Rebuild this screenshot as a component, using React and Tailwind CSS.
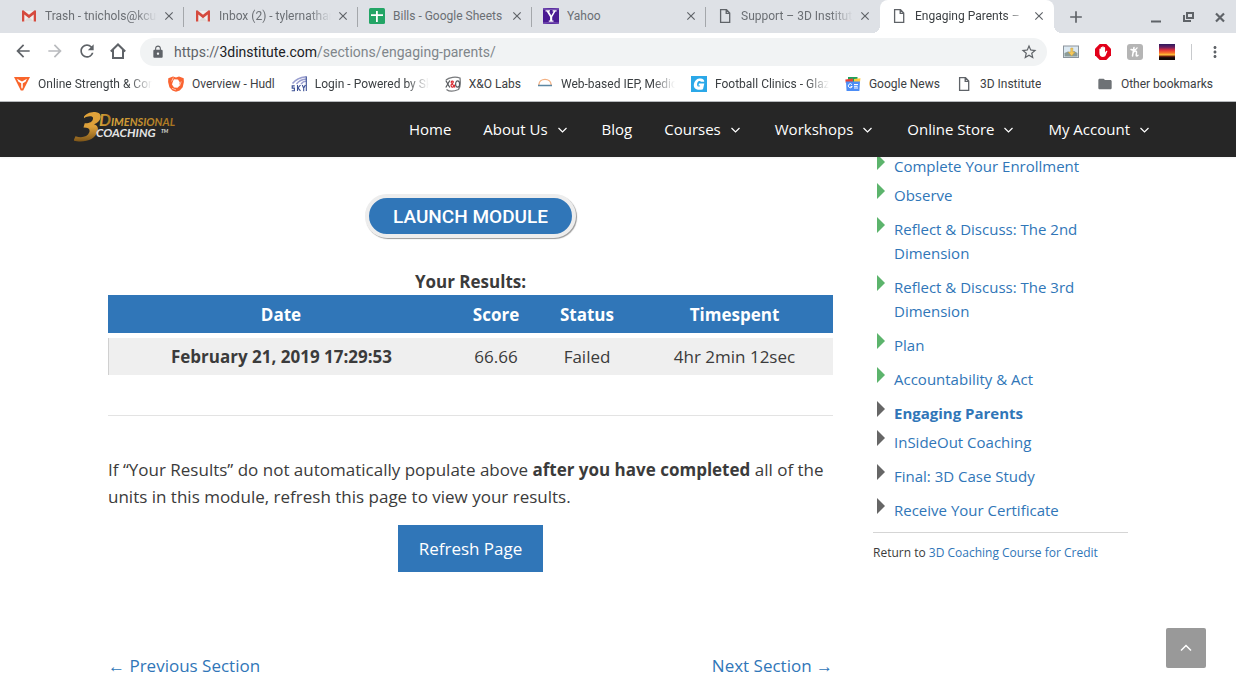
import React from "react";
import {
  MdArrowBack,
  MdArrowForward,
  MdRefresh,
  MdLock,
  MdStarBorder,
  MdMoreVert,
  MdClose,
  MdFolder,
  MdAdd,
} from "react-icons/md";

const roboto = "font-[Roboto,'Liberation_Sans',sans-serif]";
const fadeEnd = "[mask-image:linear-gradient(to_right,#000_80%,transparent)]";

function GmailIcon() {
  return (
    <svg viewBox="0 0 16 16" className="size-4 shrink-0" aria-hidden="true">
      <path d="M2 3h12v10.500H2z" fill="#efefef" />
      <path d="M3 13.500 8 9l5 4.500z" fill="#dcdcdc" />
      <path d="M1 3.200V13.500h2.300V6.600L8 10.200l4.700-3.600v6.900H15V3.200c0-.9-.9-1.200-1.600-.7L8 6.800 2.600 2.500C1.900 2 1 2.300 1 3.200z" fill="#d54b3f" />
    </svg>
  );
}

function SheetsIcon() {
  return (
    <svg viewBox="0 0 16 16" className="size-4 shrink-0" aria-hidden="true">
      <rect width="16" height="16" rx="1.500" fill="#23a566" />
      <path d="M7 3h1.800v3.200H14V8H8.800v6H7V8H2V6.200h5z" fill="#fff" />
    </svg>
  );
}

function YahooIcon() {
  return (
    <svg viewBox="0 0 16 16" className="size-4 shrink-0" aria-hidden="true">
      <rect width="16" height="16" fill="#4a1a93" />
      <path d="M0 0q8 1.500 16 0v1.500q-8 1-16 0zM0 16q8-1.500 16 0v-1.500q-8-1-16 0z" fill="#7a55b5" />
      <path d="M2.500 2.300H7v1.200H6l2.300 4 2.400-4H9.600V2.300h4v1.200h-1.200L9.200 9v3.600h1.300v1.200H5.800v-1.200h1.300V9L3.700 3.500H2.500z" fill="#fff" />
    </svg>
  );
}

function PageIcon() {
  return (
    <svg viewBox="0 0 16 16" className="size-4 shrink-0" fill="none" stroke="#5f6368" strokeWidth="1.300" aria-hidden="true">
      <path d="M3.600 1.700h5.900l3.200 3.400v9.300H3.600zM9.200 1.700v3.700h3.500" />
    </svg>
  );
}

function VoltIcon() {
  return (
    <svg viewBox="0 0 16 16" className="size-4 shrink-0" aria-hidden="true">
      <path
        d="M0 1h16L9.200 14.500H6.800zM3 2.800l1.500 3 2.700 1.400v4L8 13l.8-1.800v-4l2.700-1.400 1.500-3-5 2.600z"
        fill="#f9652b"
        fillRule="evenodd"
      />
    </svg>
  );
}

function HudlIcon() {
  return (
    <svg viewBox="0 0 16 16" className="size-4 shrink-0" aria-hidden="true">
      <path d="M.3 2.300 5 .6l3 1 3-1 4.700 1.700.2 3.700-1.200 5.200-3 3.400L8 15.800l-3.600-1.200-3-3.400L.1 6z" fill="#fa6432" />
      <path d="M5.500 3.200 10 3.500l1.700 2.700.3 3-2.500 2.600-3.500-.3L4 8.500z" fill="#fff" />
      <path d="M5 .8 6.300 2 4.500 6.300 3 5zM4.200 11.500l3.300 1.400-.8 1.600-2.900-1.200zM12 6l3 .5-1 2.200-2.500-.2z" fill="#fa6432" />
      <path d="m5.300 1.500-1.700 4M4 12.300l4 1.600M11.500 10l1.700-4.500" stroke="#ffd5c4" strokeWidth=".8" fill="none" />
    </svg>
  );
}

function SkyIcon() {
  return (
    <svg viewBox="0 0 16 16" className="size-4 shrink-0" fill="none" aria-hidden="true">
      <path d="M1.500 7.500C4.500 3.500 9 1.200 15.500.7M5.500 8c2-2.800 5.500-4.700 10-5M10 8c1.200-1.600 3-2.700 5.500-3" stroke="#9a9fd0" strokeWidth="1.500" />
      <path d="M3.700 9.900H1.200v2.200h2.200v2.600H.7M6.500 9v6M9.500 9.200l-2.600 2.700 2.600 3M11.300 9l1.400 3.200L14.300 9M12.700 12v3.200M15.300.5V15" stroke="#3c5095" strokeWidth="1.100" />
    </svg>
  );
}

function XOIcon() {
  return (
    <svg viewBox="0 0 16 16" className="size-4 shrink-0" fill="none" aria-hidden="true">
      <path d="M1 4C4 1 11 .5 15 2c.5 4 .5 9-1.500 11.500C9 15.500 4 15.500 1.500 13.500" stroke="#77797c" strokeWidth="1.300" />
      <path d="M.8 4.500l4 7M4.800 4.500l-4 7" stroke="#55585c" strokeWidth="1.200" />
      <path d="M10 11.500 6.300 6.500c-.6-1.500 2-2 2-.4 0 1.400-2.500 1.700-2.300 3.600.3 2 3.200 2 4-1" stroke="#d9272e" strokeWidth="1.200" />
      <ellipse cx="12.600" cy="8" rx="2" ry="3.200" stroke="#55585c" strokeWidth="1.200" />
    </svg>
  );
}

function SunriseIcon() {
  return (
    <svg viewBox="0 0 16 16" className="size-4 shrink-0" fill="none" aria-hidden="true">
      <path d="M1.800 9C2 1.500 14 1.500 14.200 9" stroke="#f3b183" strokeWidth="1.400" />
      <path d="M1 9.500h14" stroke="#5b87a3" strokeWidth="1.500" />
    </svg>
  );
}

function GlazierIcon() {
  return (
    <svg viewBox="0 0 16 16" className="size-4 shrink-0" aria-hidden="true">
      <rect width="16" height="16" fill="#2ba8e8" />
      <path d="M13.200 5.800H9.900c-.2-1.200-3-1.300-3.700 1.400-.7 2.900 1 4 2.700 3.100l.2-.7H7.500l.5-2.200h5.300L12 13.200c-4 1.500-10 .7-9.100-4.900C3.800 3.200 7.300 2.300 9.700 2.500c2.200.1 3.700 1.300 3.500 3.300z" fill="#fff" />
    </svg>
  );
}

function NewsIcon() {
  return (
    <svg viewBox="0 0 16 16" className="size-4 shrink-0" aria-hidden="true">
      <path d="M3 1h9.500v5H3z" fill="#21a15a" />
      <path d="m9 3 6.500-.8-.7 5H9z" fill="#ffc83d" />
      <path d="M.3 3.500 8 2.600V7H.8z" fill="#e94235" />
      <path d="M1 5.500h14l-.6 9.500H1.600z" fill="#4c8df6" />
      <path d="M7 8.700A2 2 0 1 0 7.200 10.500H5.600M9 8.500h4M9 10.300h3.600M9 12h4" stroke="#fff" fill="none" />
    </svg>
  );
}

function SnapshotIcon() {
  return (
    <svg viewBox="0 0 16 16" className="size-4" aria-hidden="true">
      <rect x=".5" y="2" width="15" height="11.500" fill="#dce9f2" stroke="#8b949c" />
      <path d="M1.500 9 5 7.500 8 9l3-2 3.500 2v3.500h-13z" fill="#8b9c98" />
      <path d="M7.800 4h2v4h2.200l-3.300 4-3.500-4h2.600z" fill="#f5c95a" stroke="#c39a3c" strokeWidth=".5" />
    </svg>
  );
}

function StopHandIcon() {
  return (
    <svg viewBox="0 0 16 16" className="size-4" aria-hidden="true">
      <path d="M4.700 0h6.600L16 4.700v6.600L11.300 16H4.700L0 11.300V4.700z" fill="#e2001a" />
      <path d="M4.400 8.800V5c0-.8 1.300-.8 1.300 0V3.600c0-.9 1.500-.9 1.500 0V3c0-.9 1.500-.9 1.500 0v.7c0-.9 1.400-.9 1.400 0v4.700l1-1.300c.6-.7 1.500-.2 1.200.5l-1.700 4c-.5 1-1.300 1.400-2.600 1.400-2.200 0-3.600-1.300-3.600-4.200z" fill="#fff" />
    </svg>
  );
}

function HoneyIcon() {
  return (
    <svg viewBox="0 0 16 16" className="size-4" aria-hidden="true">
      <rect width="16" height="16" rx="3" fill="#b5b5b5" />
      <path d="M7 3.500 5.500 12M6.300 8.500c1.300-2 3.500-1.800 3.200.2L9.200 11c-.1 1.200.9 1.200 1.800.3M4 5.500c2.500.8 5 .3 6-1.500" stroke="#fff" strokeWidth="1.500" fill="none" strokeLinecap="round" />
    </svg>
  );
}

function SunsetIcon() {
  return (
    <svg viewBox="0 0 16 16" className="size-4" aria-hidden="true">
      <defs>
        <linearGradient id="dusk" x1="0" y1="0" x2="0" y2="1">
          <stop offset="0" stopColor="#2b1a5e" />
          <stop offset=".2" stopColor="#6b1f5e" />
          <stop offset=".38" stopColor="#e0303a" />
          <stop offset=".55" stopColor="#f7702b" />
          <stop offset=".68" stopColor="#ffc43a" />
          <stop offset=".76" stopColor="#7d2412" />
          <stop offset=".86" stopColor="#120808" />
        </linearGradient>
      </defs>
      <rect width="16" height="16" fill="url(#dusk)" />
    </svg>
  );
}

function HomeIcon() {
  return (
    <svg viewBox="0 0 18 18" className="size-[18px]" fill="none" stroke="#5f6368" strokeWidth="2" aria-hidden="true">
      <path d="M1.800 9.500 9 2.500l7.200 7M4 8v8h10V8" />
    </svg>
  );
}

const tabs = [
  { title: "Trash - tnichols@kcus", Icon: GmailIcon, fade: true },
  { title: "Inbox (2) - tylernathan", Icon: GmailIcon, fade: true },
  { title: "Bills - Google Sheets", Icon: SheetsIcon },
  { title: "Yahoo", Icon: YahooIcon },
  { title: "Support – 3D Institut", Icon: PageIcon, fade: true },
  { title: "Engaging Parents –", Icon: PageIcon, fade: true, active: true },
];

const bookmarks = [
  { title: "Online Strength & Con", Icon: VoltIcon, fade: true },
  { title: "Overview - Hudl", Icon: HudlIcon },
  { title: "Login - Powered by Sk", Icon: SkyIcon, fade: true },
  { title: "X&O Labs", Icon: XOIcon },
  { title: "Web-based IEP, Medic", Icon: SunriseIcon, fade: true },
  { title: "Football Clinics - Glaz", Icon: GlazierIcon, fade: true },
  { title: "Google News", Icon: NewsIcon },
  { title: "3D Institute", Icon: PageIcon },
];

const menu = [
  { label: "Home" },
  { label: "About Us", more: true },
  { label: "Blog" },
  { label: "Courses", more: true },
  { label: "Workshops", more: true },
  { label: "Online Store", more: true },
  { label: "My Account", more: true },
];

const sections = [
  { label: "Complete Your Enrollment", done: true, tight: true },
  { label: "Observe", done: true },
  { label: "Reflect & Discuss: The 2nd Dimension", done: true },
  { label: "Reflect & Discuss: The 3rd Dimension", done: true },
  { label: "Plan", done: true },
  { label: "Accountability & Act", done: true },
  { label: "Engaging Parents", current: true, tight: true },
  { label: "InSideOut Coaching" },
  { label: "Final: 3D Case Study" },
  { label: "Receive Your Certificate" },
];

function Tab({ title, Icon, fade, active }) {
  const activeStyle =
    "rounded-t-lg bg-white text-[#3c4043] before:absolute before:-left-2 before:bottom-0 before:size-2 before:bg-[radial-gradient(circle_at_0_0,transparent_8px,white_8px)] after:absolute after:-right-2 after:bottom-0 after:size-2 after:bg-[radial-gradient(circle_at_100%_0,transparent_8px,white_8px)]";
  return (
    <div className={`relative flex h-full min-w-0 max-w-[174px] flex-1 items-center pb-px pl-[11px] ${active ? activeStyle : "text-[#6b6f74]"}`}>
      <button role="tab" aria-selected={!!active} className="flex min-w-0 flex-1 items-center gap-2">
        <Icon />
        <span className={`min-w-0 flex-1 overflow-hidden text-left whitespace-nowrap ${fade ? fadeEnd : ""}`}>{title}</span>
      </button>
      <button aria-label={`Close ${title}`} className="ml-1 mr-[7px] flex size-4 items-center justify-center">
        <MdClose className="size-[14px] text-[#5f6368]" />
      </button>
    </div>
  );
}

function Browser() {
  return (
    <div className={`${roboto} text-xs`}>
      <div className="flex h-[33px] items-center bg-[#dee1e6] pl-[10px]">
        <div role="tablist" className="flex h-full min-w-0 flex-1 items-center">
          {tabs.map((tab, i) => (
            <React.Fragment key={tab.title}>
              <Tab {...tab} />
              {i < 4 && <span className="-ml-px h-5 w-px bg-[#a4a7ab]" />}
            </React.Fragment>
          ))}
          <button aria-label="New tab" className="ml-3 text-[#5f6368]">
            <MdAdd className="size-5" />
          </button>
        </div>
        <div className="flex items-center gap-4 pr-2 text-[#5f6368]">
          <button aria-label="Minimize">
            <svg viewBox="0 0 16 16" className="size-4"><path d="M3 11.500h10v2H3z" fill="currentColor" /></svg>
          </button>
          <button aria-label="Restore">
            <svg viewBox="0 0 16 16" className="size-4" fill="none" stroke="currentColor" strokeWidth="2"><path d="M7 4h6v5H7zM4 6v6h7" /></svg>
          </button>
          <button aria-label="Close window">
            <svg viewBox="0 0 16 16" className="size-4" fill="none" stroke="currentColor" strokeWidth="2.200"><path d="m4 4.500 8 8m0-8-8 8" /></svg>
          </button>
        </div>
      </div>

      <div className="flex h-[37px] items-center bg-white pr-3 pl-[13px] text-[#5f6368]">
        <div className="flex items-center gap-3 pb-px">
          <button aria-label="Back"><MdArrowBack className="size-5" /></button>
          <button aria-label="Forward"><MdArrowForward className="size-5 text-[#b9bbbe]" /></button>
          <button aria-label="Reload"><MdRefresh className="size-5" /></button>
          <button aria-label="Home"><HomeIcon /></button>
        </div>
        <div className="ml-[13px] flex h-7 flex-1 items-center rounded-full bg-[#f1f3f4] pr-[9px] pl-[11px]">
          <MdLock className="size-[14px]" />
          <label htmlFor="address" className="ml-[9px] text-sm text-[#80868b]">
            <span className="text-[#5f6368]">https://</span>
            <span className="text-[#202124]">3dinstitute.com</span>
            /sections/engaging-parents/
          </label>
          <input id="address" type="text" className="min-w-0 flex-1 bg-transparent text-sm outline-none" />
          <button aria-label="Bookmark this page"><MdStarBorder className="size-[18px]" /></button>
        </div>
        <div className="ml-4 flex items-center gap-4">
          <button aria-label="Screenshot"><SnapshotIcon /></button>
          <button aria-label="Ad blocker"><StopHandIcon /></button>
          <button aria-label="Coupons"><HoneyIcon /></button>
          <button aria-label="Theme"><SunsetIcon /></button>
          <span className="h-4 w-px bg-[#c8cacd]" />
          <button aria-label="Menu" className="-ml-[2px]"><MdMoreVert className="size-[18px]" /></button>
        </div>
      </div>

      <div className="flex h-[32px] items-center gap-4 border-b border-[#b6b9bc] bg-white pr-[23px] pb-1 pl-[14px] text-[#3c4043]">
        {bookmarks.map(({ title, Icon, fade }) => (
          <a key={title} href="#" className="flex min-w-0 items-center gap-2">
            <Icon />
            <span className={`max-w-[114px] overflow-hidden whitespace-nowrap ${fade ? fadeEnd : ""}`}>{title}</span>
          </a>
        ))}
        <button className="ml-auto flex items-center gap-2 whitespace-nowrap">
          <MdFolder className="size-4 text-[#6e7276]" />
          Other bookmarks
        </button>
      </div>
    </div>
  );
}

function Logo() {
  return (
    <svg viewBox="0 0 106 32" className="h-8 w-[106px]" role="img" aria-label="3Dimensional Coaching">
      <defs>
        <linearGradient id="gold" x1="0" y1="0" x2="0" y2="1">
          <stop offset="0" stopColor="#e0a23a" />
          <stop offset=".5" stopColor="#dca03a" />
          <stop offset="1" stopColor="#7d5518" />
        </linearGradient>
        <linearGradient id="amber" x1="0" y1="0" x2="1" y2="0">
          <stop offset="0" stopColor="#dca83c" />
          <stop offset="1" stopColor="#a87420" />
        </linearGradient>
      </defs>
      <path d="M10 4.500C13 .8 17.500 0 21 0c4 .3 6.500 2.300 5.500 6-.7 3-3.200 5-6.500 6.200 3.500 1 4.700 3.700 3.500 7.300C21.500 26 15 29.500 6.500 29.500c-2.600 0-5.500-.4-7-1l2-4.300c6 2 12 .8 13.800-4 1-3-.7-4.700-5.800-4.700l1.200-4.200c5 .2 7.500-1.500 8.200-4 .6-2.200-.7-3-3-3-2 0-4 .7-5.900 1.900z" fill="url(#gold)" />
      <g fontFamily="Lato, sans-serif" fontStyle="italic" fontWeight="700">
        <text x="25" y="14" fontSize="17" fill="url(#amber)">D</text>
        <text x="37" y="14" fontSize="11" fill="url(#amber)">IMENSIONAL</text>
        <text x="22" y="25" fontSize="12" fill="#e4e4e4">COACHING</text>
        <text x="87" y="21" fontSize="5" fill="#e4e4e4">TM</text>
      </g>
    </svg>
  );
}

function Header() {
  return (
    <header className="relative z-10 bg-[#262626] shadow-xs">
      <div className="mx-auto flex h-[55px] max-w-[1100px] items-center justify-between pl-[6px]">
        <a href="#" className="pb-1"><Logo /></a>
        <nav className="flex text-[15px] text-white">
          {menu.map(({ label, more }) => (
            <a key={label} href="#" className="flex items-center gap-2 px-4 whitespace-nowrap">
              {label}
              {more && (
                <svg viewBox="0 0 14 14" className="size-[14px]" fill="none" stroke="currentColor" strokeWidth="1.200" aria-hidden="true">
                  <path d="m2.500 5 4 4 4-4" />
                </svg>
              )}
            </a>
          ))}
        </nav>
      </div>
    </header>
  );
}

function Results() {
  return (
    <table className="w-full table-fixed border-separate border-spacing-0 text-center">
      <caption className="leading-[27px] font-bold">Your Results:</caption>
      <colgroup>
        <col />
        <col className="w-[84px]" />
        <col className="w-[98px]" />
        <col className="w-[197px]" />
      </colgroup>
      <thead className="text-white">
        <tr>
          {["Date", "Score", "Status", "Timespent"].map((name) => (
            <th key={name} scope="col" className="h-[43px] border-b-5 border-white bg-[#3076b8] p-0 font-bold">{name}</th>
          ))}
        </tr>
      </thead>
      <tbody>
        <tr className="h-[37px] bg-[#efefef]">
          <th scope="row" className="border-l border-[#d0d0d0] p-0 font-bold">February 21, 2019 17:29:53</th>
          <td className="p-0">66.66</td>
          <td className="p-0">Failed</td>
          <td className="p-0">4hr 2min 12sec</td>
        </tr>
      </tbody>
    </table>
  );
}

export default function App() {
  return (
    <div className="min-h-screen bg-white font-['Open_Sans','Noto_Sans',sans-serif]">
      <Browser />
      <Header />
      <div className="mx-auto flex max-w-[1020px] gap-10">
        <main className="min-w-0 flex-1 pt-[37px] text-[17px] leading-[27px] text-[#3b3b3b]">
          <div className="flex justify-center">
            <button className="h-[44px] rounded-full border-4 border-[#ededed] bg-[#3076b8] px-6 font-[Roboto,sans-serif] text-[19px] leading-none font-medium text-white shadow-[1px_1px_1px_#999]">
              LAUNCH MODULE
            </button>
          </div>
          <div className="mt-[30px]">
            <Results />
          </div>
          <hr className="mt-10 border-[#e3e3e3]" />
          <p className="mt-10">
            If “Your Results” do not automatically populate above <strong>after you have completed</strong> all of the
            units in this module, refresh this page to view your results.
          </p>
          <div className="mt-[15px] flex justify-center">
            <button className="h-[47px] bg-[#3076b8] px-[21px] text-white">Refresh Page</button>
          </div>
          <div className="mt-20 flex justify-between text-[#3076b8]">
            <a href="#">← Previous Section</a>
            <a href="#">Next Section →</a>
          </div>
        </main>

        <aside className="-mt-[3px] w-[255px] shrink-0 text-[15px] leading-6">
          <ul className="pl-1">
            {sections.map(({ label, done, current, tight }) => (
              <li key={label} className={`flex items-start gap-[9px] ${tight ? "mb-[5px]" : "mb-[10px]"}`}>
                <svg viewBox="0 0 8 16" className={`h-4 w-2 shrink-0 ${done ? "text-[#5cb46c]" : "text-[#666]"}`} aria-hidden="true">
                  <path d="M0 0l8 8-8 8z" fill="currentColor" />
                </svg>
                <a href="#" className={`max-w-[200px] text-[#3076b8] ${current ? "font-bold" : ""}`}>{label}</a>
              </li>
            ))}
          </ul>
          <hr className="border-[#d5d5d5]" />
          <p className="mt-2 text-xs leading-6 text-[#3b3b3b]">
            Return to <a href="#" className="text-[#3076b8]">3D Coaching Course for Credit</a>
          </p>
        </aside>
      </div>
      <button aria-label="Back to top" className="fixed right-[30px] bottom-[30px] flex size-10 items-center justify-center rounded-xs bg-[#999] text-white">
        <svg viewBox="0 0 14 14" className="size-[14px]" fill="none" stroke="currentColor" strokeWidth="1.500" aria-hidden="true">
          <path d="m2 9.500 5-5 5 5" />
        </svg>
      </button>
    </div>
  );
}
